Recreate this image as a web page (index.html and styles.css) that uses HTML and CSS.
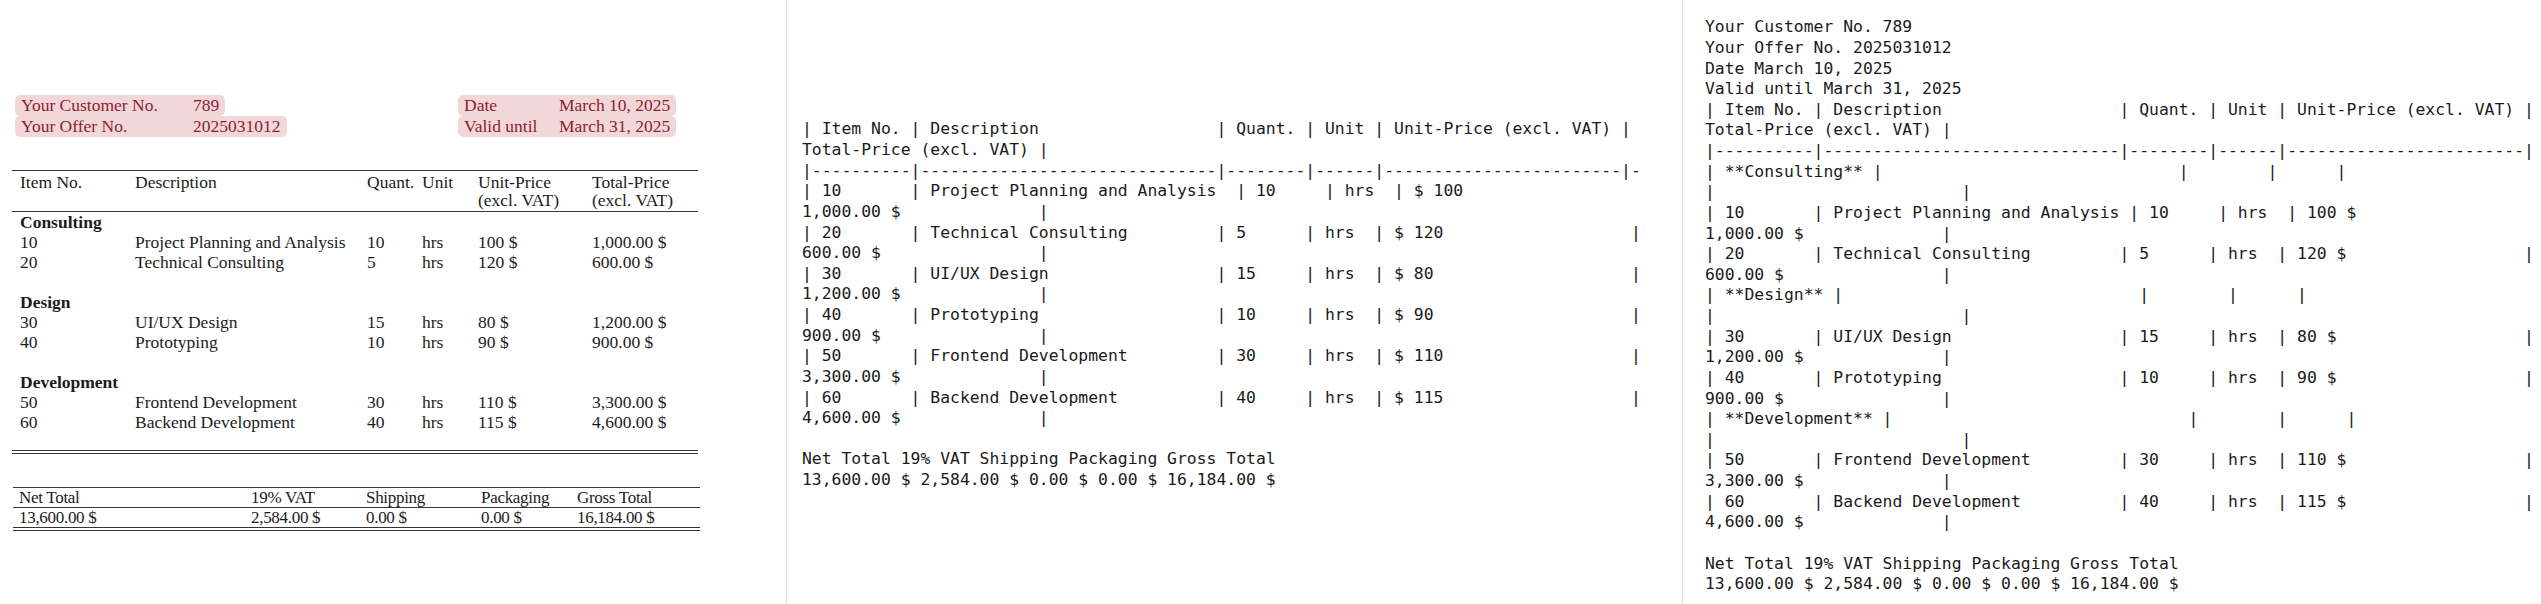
FILE: index.html
```html
<!DOCTYPE html>
<html>
<head>
<meta charset="utf-8">
<title>Offer</title>
<link rel="stylesheet" href="styles.css">
</head>
<body>
<div class="panes">
  <section class="pane pdf">
    <div class="info">
      <div class="infobox first">
        <div class="hl"><span class="lbl-a">Your Customer No.</span><span>789</span></div>
        <div class="hl"><span class="lbl-a">Your Offer No.</span><span>2025031012</span></div>
      </div>
      <div class="infobox">
        <div class="hl"><span class="lbl-b">Date</span><span>March 10, 2025</span></div>
        <div class="hl"><span class="lbl-b">Valid until</span><span>March 31, 2025</span></div>
      </div>
    </div>
    <table class="items">
      <thead>
        <tr>
          <th class="c1">Item No.</th>
          <th class="c2">Description</th>
          <th class="c3">Quant.</th>
          <th class="c4">Unit</th>
          <th class="c5">Unit-Price<br>(excl. VAT)</th>
          <th class="c6">Total-Price<br>(excl. VAT)</th>
        </tr>
      </thead>
      <tbody>
        <tr class="cat"><td colspan="6">Consulting</td></tr>
        <tr><td>10</td><td>Project Planning and Analysis</td><td>10</td><td>hrs</td><td>100 $</td><td>1,000.00 $</td></tr>
        <tr><td>20</td><td>Technical Consulting</td><td>5</td><td>hrs</td><td>120 $</td><td>600.00 $</td></tr>
        <tr class="blank"><td colspan="6"></td></tr>
        <tr class="cat"><td colspan="6">Design</td></tr>
        <tr><td>30</td><td>UI/UX Design</td><td>15</td><td>hrs</td><td>80 $</td><td>1,200.00 $</td></tr>
        <tr><td>40</td><td>Prototyping</td><td>10</td><td>hrs</td><td>90 $</td><td>900.00 $</td></tr>
        <tr class="blank"><td colspan="6"></td></tr>
        <tr class="cat"><td colspan="6">Development</td></tr>
        <tr><td>50</td><td>Frontend Development</td><td>30</td><td>hrs</td><td>110 $</td><td>3,300.00 $</td></tr>
        <tr><td>60</td><td>Backend Development</td><td>40</td><td>hrs</td><td>115 $</td><td>4,600.00 $</td></tr>
        <tr class="blank"><td colspan="6"></td></tr>
      </tbody>
    </table>
    <table class="sum">
      <thead>
        <tr><th class="s1">Net Total</th><th class="s2">19% VAT</th><th class="s3">Shipping</th><th class="s4">Packaging</th><th class="s5">Gross Total</th></tr>
      </thead>
      <tbody>
        <tr><td>13,600.00 $</td><td>2,584.00 $</td><td>0.00 $</td><td>0.00 $</td><td>16,184.00 $</td></tr>
      </tbody>
    </table>
  </section>

  <section class="pane mid">
<pre class="mono">| Item No. | Description                  | Quant. | Unit | Unit-Price (excl. VAT) |
Total-Price (excl. VAT) |
|----------|------------------------------|--------|------|------------------------|-
| 10       | Project Planning and Analysis  | 10     | hrs  | $ 100
1,000.00 $              |
| 20       | Technical Consulting         | 5      | hrs  | $ 120                   |
600.00 $                |
| 30       | UI/UX Design                 | 15     | hrs  | $ 80                    |
1,200.00 $              |
| 40       | Prototyping                  | 10     | hrs  | $ 90                    |
900.00 $                |
| 50       | Frontend Development         | 30     | hrs  | $ 110                   |
3,300.00 $              |
| 60       | Backend Development          | 40     | hrs  | $ 115                   |
4,600.00 $              |

Net Total 19% VAT Shipping Packaging Gross Total
13,600.00 $ 2,584.00 $ 0.00 $ 0.00 $ 16,184.00 $</pre>
  </section>

  <section class="pane rt">
<pre class="mono">Your Customer No. 789
Your Offer No. 2025031012
Date March 10, 2025
Valid until March 31, 2025
| Item No. | Description                  | Quant. | Unit | Unit-Price (excl. VAT) |
Total-Price (excl. VAT) |
|----------|------------------------------|--------|------|------------------------|
| **Consulting** |                              |        |      |
|                         |
| 10       | Project Planning and Analysis | 10     | hrs  | 100 $
1,000.00 $              |
| 20       | Technical Consulting         | 5      | hrs  | 120 $                  |
600.00 $                |
| **Design** |                              |        |      |
|                         |
| 30       | UI/UX Design                 | 15     | hrs  | 80 $                   |
1,200.00 $              |
| 40       | Prototyping                  | 10     | hrs  | 90 $                   |
900.00 $                |
| **Development** |                              |        |      |
|                         |
| 50       | Frontend Development         | 30     | hrs  | 110 $                  |
3,300.00 $              |
| 60       | Backend Development          | 40     | hrs  | 115 $                  |
4,600.00 $              |

Net Total 19% VAT Shipping Packaging Gross Total
13,600.00 $ 2,584.00 $ 0.00 $ 0.00 $ 16,184.00 $</pre>
  </section>
</div>
</body>
</html>
```

FILE: styles.css
```css
* { box-sizing: border-box; }
html, body { margin: 0; padding: 0; background: #ffffff; }
body { width: 2541px; height: 604px; overflow: hidden; }

.panes {
  display: grid;
  grid-template-columns: 786px 896px 859px;
  height: 604px;
}
.pane { height: 604px; overflow: hidden; }
.pane + .pane { border-left: 1px solid #dddddd; }

/* ---------- rendered document ---------- */
.pdf {
  padding: 95px 0 0 12px;
  font-family: "Liberation Serif", "Times New Roman", serif;
  font-size: 17.5px;
  color: #1c1c1c;
}
.info { display: flex; margin-left: 3px; }
.infobox {
  display: flex;
  flex-direction: column;
  align-items: flex-start;
  flex: none;
}
.infobox.first { width: 443px; }
.hl {
  display: flex;
  height: 21px;
  line-height: 21px;
  padding: 0 6px;
  background: #f2d7da;
  color: #8c1f2e;
  border-radius: 5px;
}
.lbl-a { width: 172px; }
.lbl-b { width: 95px; }

.items {
  margin-top: 33px;
  border-collapse: collapse;
  table-layout: fixed;
  width: 686px;
}
.items th, .items td {
  text-align: left;
  font-weight: normal;
  padding: 0 0 0 8px;
  white-space: nowrap;
}
.items thead tr { border-top: 1px solid #3a3a3a; border-bottom: 1px solid #3a3a3a; }
.items th { line-height: 18px; padding-top: 2px; padding-bottom: 2px; vertical-align: top; }
.items td { height: 20px; line-height: 20px; }
.items .cat td { font-weight: bold; }
.items tbody { border-bottom: 4px double #333333; }
.c1 { width: 115px; }
.c2 { width: 232px; }
.c3 { width: 55px; }
.c4 { width: 56px; }
.c5 { width: 114px; }
.c6 { width: 114px; }

.sum {
  margin-top: 33px;
  margin-left: 1px;
  border-collapse: collapse;
  table-layout: fixed;
  width: 687px;
  font-size: 17px;
  letter-spacing: -0.3px;
}
.sum th, .sum td {
  text-align: left;
  font-weight: normal;
  padding: 0 0 0 6px;
  height: 19px;
  line-height: 19px;
  white-space: nowrap;
}
.sum thead tr { border-top: 1px solid #3a3a3a; border-bottom: 1px solid #3a3a3a; }
.sum tbody { border-bottom: 4px double #333333; }
.s1 { width: 232px; }
.s2 { width: 115px; }
.s3 { width: 115px; }
.s4 { width: 96px; }
.s5 { width: 129px; }

/* ---------- plain text panes ---------- */
.mono {
  margin: 0;
  font-family: "DejaVu Sans Mono", monospace;
  font-size: 16.4px;
  line-height: 20.63px;
  white-space: pre;
  color: #1a1a1a;
}
.mid { display: flex; align-items: center; padding: 6px 0 0 15px; }
.rt { display: flex; align-items: center; padding: 8px 0 0 22px; }
```
